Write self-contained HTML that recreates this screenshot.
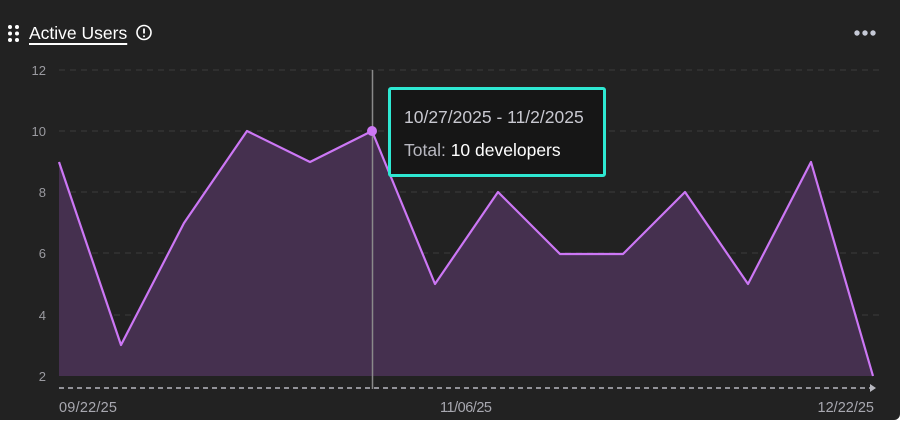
<!DOCTYPE html>
<html><head><meta charset="utf-8"><style>
html,body{margin:0;padding:0;background:#fff;width:900px;height:422px;overflow:hidden}
.card{position:absolute;left:0;top:0;width:900px;height:420px;background:#222222;border-radius:0 0 6px 0;font-family:"Liberation Sans",sans-serif}
.title{position:absolute;left:29px;top:23px;color:#fff;font-size:17.5px;line-height:20px;text-decoration:underline;text-underline-offset:4px;text-decoration-thickness:1.5px}
.tip{position:absolute;left:388px;top:87px;width:212px;height:84px;border:3px solid #2ee8d2;border-radius:3px;background:#161616;box-sizing:content-box}
.tip div{position:absolute;left:13px;font-size:17.5px;white-space:nowrap}
</style></head><body>
<div class="card">
<svg width="900" height="420" style="position:absolute;left:0;top:0">
  <g fill="#fff"><circle cx="10" cy="27" r="2"/><circle cx="17" cy="27" r="2"/><circle cx="10" cy="33.5" r="2"/><circle cx="17" cy="33.5" r="2"/><circle cx="10" cy="40" r="2"/><circle cx="17" cy="40" r="2"/></g>
  <circle cx="144" cy="32.5" r="7" fill="none" stroke="#fff" stroke-width="1.6"/>
  <line x1="144" y1="28.5" x2="144" y2="33.5" stroke="#fff" stroke-width="1.8"/>
  <circle cx="144" cy="36.3" r="1" fill="#fff"/>
  <g fill="#c5c9d6"><circle cx="857" cy="33" r="2.7"/><circle cx="865" cy="33" r="2.7"/><circle cx="873" cy="33" r="2.7"/></g>
  <g stroke="#3c3c3c" stroke-dasharray="6 5" stroke-width="1">
    <line x1="59" y1="70" x2="880" y2="70"/><line x1="59" y1="131" x2="880" y2="131"/><line x1="59" y1="192" x2="880" y2="192"/><line x1="59" y1="253" x2="880" y2="253"/><line x1="59" y1="315" x2="880" y2="315"/>
  </g>
  <g fill="#9a9aa0" font-size="13" text-anchor="end" font-family="Liberation Sans,sans-serif">
    <text x="46" y="75">12</text><text x="46" y="136">10</text><text x="46" y="197">8</text><text x="46" y="258">6</text><text x="46" y="320">4</text><text x="46" y="381">2</text>
  </g>
  <polygon fill="#45304f" points="59,376 59,162 121,345 184,223 247,131 310,162 372,131 435,284 498,192 560,254 623,254 685,192 748,284 811,162 873,376"/>
  <polyline fill="none" stroke="#cc77f5" stroke-width="2.2" stroke-linejoin="round" points="59,162 121,345 184,223 247,131 310,162 372,131 435,284 498,192 560,254 623,254 685,192 748,284 811,162 873,376"/>
  <line x1="372.5" y1="70" x2="372.5" y2="389" stroke="#8a8a8a" stroke-width="1.5"/>
  <circle cx="372" cy="131" r="5" fill="#cc77f5"/>
  <line x1="59" y1="388" x2="870" y2="388" stroke="#b8b8c0" stroke-width="1.5" stroke-dasharray="5 4"/>
  <polygon points="870,384 876,388 870,392" fill="#b8b8c0"/>
  <g fill="#a8a8b0" font-size="14.5" font-family="Liberation Sans,sans-serif">
    <text x="59" y="412" textLength="58">09/22/25</text><text x="440" y="412" textLength="52">11/06/25</text><text x="874" y="412" text-anchor="end">12/22/25</text>
  </g>
</svg>
<div class="title">Active Users</div>
<div class="tip">
  <div style="top:17px;color:#c8c8d0">10/27/2025 - 11/2/2025</div>
  <div style="top:50px;color:#fff"><span style="color:#b8b8c0">Total:</span> 10 developers</div>
</div>
</div>
</body></html>
